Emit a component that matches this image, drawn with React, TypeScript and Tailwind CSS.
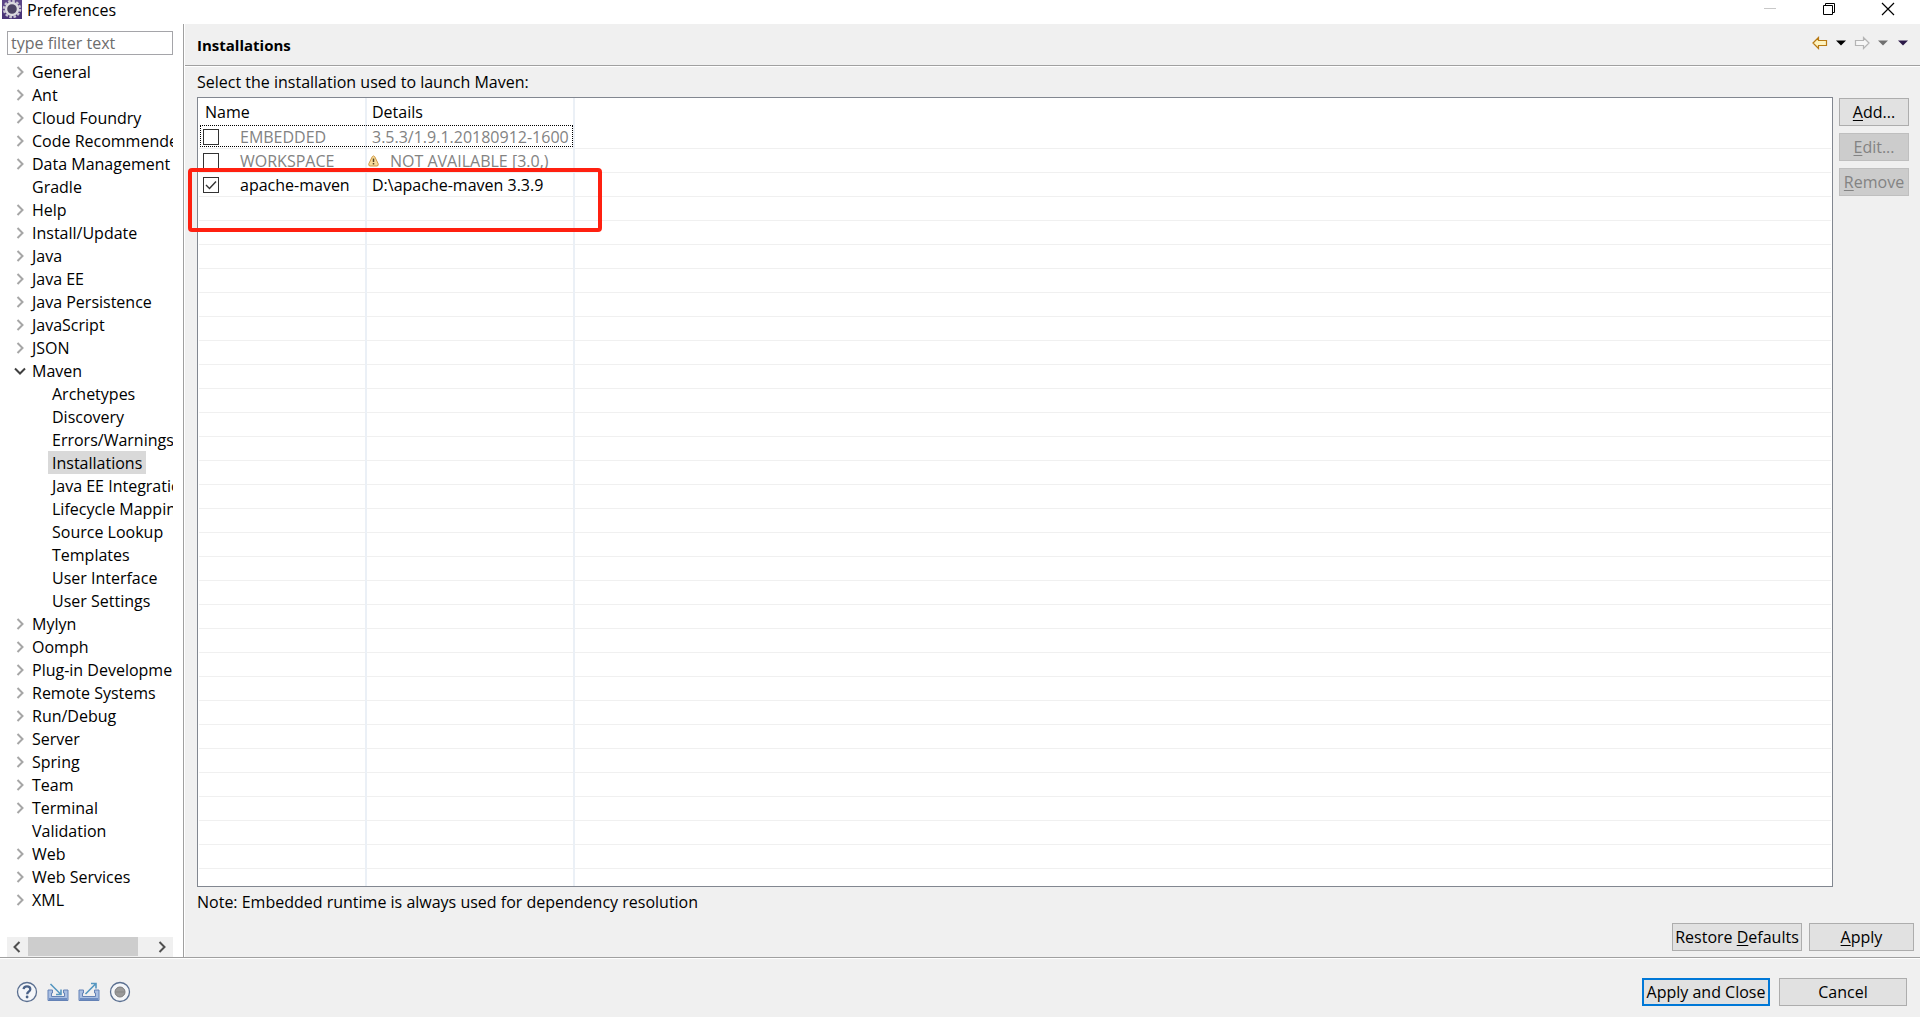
import React from 'react';

type Node = { label: string; open?: boolean; leaf?: boolean; children?: string[] };

const tree: Node[] = [
  { label: 'General' },
  { label: 'Ant' },
  { label: 'Cloud Foundry' },
  { label: 'Code Recommenders' },
  { label: 'Data Management' },
  { label: 'Gradle', leaf: true },
  { label: 'Help' },
  { label: 'Install/Update' },
  { label: 'Java' },
  { label: 'Java EE' },
  { label: 'Java Persistence' },
  { label: 'JavaScript' },
  { label: 'JSON' },
  {
    label: 'Maven',
    open: true,
    children: [
      'Archetypes',
      'Discovery',
      'Errors/Warnings',
      'Installations',
      'Java EE Integration',
      'Lifecycle Mappings',
      'Source Lookup',
      'Templates',
      'User Interface',
      'User Settings',
    ],
  },
  { label: 'Mylyn' },
  { label: 'Oomph' },
  { label: 'Plug-in Development' },
  { label: 'Remote Systems' },
  { label: 'Run/Debug' },
  { label: 'Server' },
  { label: 'Spring' },
  { label: 'Team' },
  { label: 'Terminal' },
  { label: 'Validation', leaf: true },
  { label: 'Web' },
  { label: 'Web Services' },
  { label: 'XML' },
];

const installations = [
  { name: 'EMBEDDED', details: '3.5.3/1.9.1.20180912-1600', external: false, focused: true },
  { name: 'WORKSPACE', details: 'NOT AVAILABLE [3.0,)', external: false, warning: true },
  { name: 'apache-maven', details: 'D:\\apache-maven 3.3.9', external: true },
];

const blankRows = Array.from({ length: 29 }, (_, i) => i);

const EclipseIcon = () => (
  <svg width="20" height="19" viewBox="0 0 20 19" aria-hidden="true">
    <rect width="20" height="19" fill="#5c4688" />
    <rect y="11" width="20" height="8" fill="#4a3578" />
    <circle cx="10" cy="9" r="8" fill="none" stroke="#c9c6d2" strokeWidth="2.4" strokeDasharray="2.6 1.59" />
    <circle cx="10" cy="9" r="6" fill="#4c4464" stroke="#dcdbe0" strokeWidth="2.4" />
  </svg>
);

const WarningIcon = () => (
  <svg width="11" height="12" viewBox="0 0 11 12" aria-hidden="true">
    <path d="M4.3 1.6 Q5.5 .2 6.7 1.6 L10.2 8.8 Q10.6 11 9 11 H2 Q.4 11 .8 8.8 Z" fill="#f8dc9a" stroke="#cf9a48" strokeLinejoin="round" />
    <path d="M5.5 3.5 V7 M5.5 8 V9.5" stroke="#5a4420" strokeWidth="1.5" />
  </svg>
);

const Arrow = ({ back }: { back?: boolean }) => (
  <svg width="16" height="14" viewBox="0 0 16 14" aria-hidden="true">
    {back ? (
      <path d="M1 7 L6.5 1.5 V4.5 H14.5 V9.5 H6.5 V12.5 Z" fill="#fdf3c0" stroke="#b87a14" strokeWidth="1.2" />
    ) : (
      <path d="M15 7 L9.5 1.5 V4.5 H1.5 V9.5 H9.5 V12.5 Z" fill="#f6f6f6" stroke="#b4b4b4" strokeWidth="1.2" />
    )}
  </svg>
);

const Caret = ({ color }: { color: string }) => (
  <svg width="10" height="6" viewBox="0 0 10 6" aria-hidden="true">
    <path d="M0 .5 H10 L5 5.5 Z" fill={color} />
  </svg>
);

const TrayIcon = ({ out }: { out?: boolean }) => (
  <svg width="22" height="20" viewBox="0 0 22 20" aria-hidden="true">
    <path d="M1 8 H5.5 V11 H4.5 V14.5 H17.5 V11 H16.5 V8 H21 V18.5 H1 Z" fill="#a9bfe2" stroke="#6482b6" />
    <path d="M2 17 H20" stroke="#6c8cc2" strokeWidth="2" />
    {out ? (
      <path d="M7.5 12 L17.5 2 M13 1.5 H18 V6.5" fill="none" stroke="#5596c0" strokeWidth="1.6" />
    ) : (
      <path d="M3.5 2 L13.5 12 M14 7.5 V12.5 H9" fill="none" stroke="#5596c0" strokeWidth="1.6" />
    )}
  </svg>
);

const Chevron = ({ open }: { open?: boolean }) =>
  open ? (
    <svg width="12" height="8" viewBox="0 0 12 8" aria-hidden="true">
      <path d="M1 1.5 L6 6.5 L11 1.5" fill="none" stroke="#404040" strokeWidth="2" />
    </svg>
  ) : (
    <svg width="8" height="12" viewBox="0 0 8 12" aria-hidden="true">
      <path d="M1.5 1 L6.5 6 L1.5 11" fill="none" stroke="#a6a6a6" strokeWidth="2" />
    </svg>
  );

const Button = ({ className = '', children, disabled }: { className?: string; children: React.ReactNode; disabled?: boolean }) => (
  <button
    type="button"
    disabled={disabled}
    className={`h-7 whitespace-nowrap border border-[#adadad] bg-[#e1e1e1] text-center leading-6 underline-offset-2 disabled:border-[#bfbfbf] disabled:bg-[#cccccc] disabled:text-[#838383] ${className}`}
  >
    {children}
  </button>
);

const TitleBar = () => (
  <header className="flex h-6 shrink-0 items-start justify-between bg-white pl-0.5">
    <div className="flex items-start gap-[5px]">
      <EclipseIcon />
      <h1 className="leading-5">Preferences</h1>
    </div>
    <div className="flex gap-[45px] pt-0.5 pr-[25px]">
      <button type="button" aria-label="Minimize" disabled>
        <svg width="14" height="14" viewBox="0 0 14 14">
          <path d="M1 6.5 H13" stroke="#c8c8c8" />
        </svg>
      </button>
      <button type="button" aria-label="Restore">
        <svg width="14" height="14" viewBox="0 0 14 14" fill="none" stroke="#000">
          <path d="M1.5 3.5 H10.5 V12.5 H1.5 Z M3.5 3.5 V1.5 H12.5 V10.5 H10.5" />
        </svg>
      </button>
      <button type="button" aria-label="Close">
        <svg width="14" height="14" viewBox="0 0 14 14">
          <path d="M1 1 L13 13 M13 1 L1 13" stroke="#000" strokeWidth="1.2" />
        </svg>
      </button>
    </div>
  </header>
);

const Sidebar = () => (
  <aside className="flex w-[184px] shrink-0 flex-col border-r border-[#a0a0a0] bg-white pt-[7px] pr-2.5 pl-[7px]">
    <input
      type="text"
      aria-label="Filter"
      placeholder="type filter text"
      className="h-6 w-full shrink-0 border border-[#a5a5a9] px-[3px] placeholder:text-[#6d6d6d]"
    />
    <ul role="tree" className="min-h-0 flex-1 overflow-hidden pt-[5px]">
      {tree.map((node) => (
        <li key={node.label} role="treeitem" aria-expanded={node.leaf ? undefined : !!node.open}>
          <button type="button" className="flex h-[23px] items-center whitespace-nowrap">
            <span className={`w-[25px] ${node.open ? 'pl-[7px]' : 'pl-[9px]'}`}>{!node.leaf && <Chevron open={node.open} />}</span>
            {node.label}
          </button>
          {node.children && (
            <ul role="group" className="pl-[41px]">
              {node.children.map((child) => (
                <li key={child} role="treeitem" aria-selected={child === 'Installations'}>
                  <button
                    type="button"
                    className={`flex h-[23px] items-center whitespace-nowrap px-1 ${child === 'Installations' ? 'bg-[#d9d9d9]' : ''}`}
                  >
                    {child}
                  </button>
                </li>
              ))}
            </ul>
          )}
        </li>
      ))}
    </ul>
    <div className="flex h-5 shrink-0 bg-[#f0f0f0]">
      <button type="button" aria-label="Scroll left" className="flex w-[21px] items-center pl-1.5">
        <svg width="8" height="12" viewBox="0 0 8 12">
          <path d="M6.5 1 L1.5 6 L6.5 11" fill="none" stroke="#505050" strokeWidth="2" />
        </svg>
      </button>
      <div className="flex-1">
        <div className="h-[19px] w-[110px] bg-[#cdcdcd]" />
      </div>
      <button type="button" aria-label="Scroll right" className="flex w-[21px] items-center pl-1.5">
        <svg width="8" height="12" viewBox="0 0 8 12">
          <path d="M1.5 1 L6.5 6 L1.5 11" fill="none" stroke="#505050" strokeWidth="2" />
        </svg>
      </button>
    </div>
  </aside>
);

const InstallationsTable = () => (
  <div className="relative min-w-0 flex-1">
    <div className="h-full overflow-hidden border border-[#828790] bg-white px-px">
      <table className="w-full table-fixed border-collapse">
        <colgroup>
          <col className="w-[167px]" />
          <col className="w-[208px]" />
          <col />
        </colgroup>
        <thead>
          <tr className="h-[26px] text-left">
            <th className="border-r-2 border-[#ebf0f6] p-0 pt-0.5 pl-1.5 font-normal">Name</th>
            <th className="border-r-2 border-[#ebf0f6] p-0 pt-0.5 pl-[5px] font-normal">Details</th>
            <td />
          </tr>
        </thead>
        <tbody>
          {installations.map((row) => (
            <tr key={row.name} className={`h-6 border-b border-[#f0f0f0] ${row.external ? '' : 'text-[#838383]'}`}>
              <td className="relative border-r-2 border-r-[#ebf0f6] p-0 pt-0.5 pl-1">
                {row.focused && <div className="absolute top-px left-px h-[22px] w-[373px] border border-dotted border-black" />}
                <label className="flex items-center leading-5">
                  <input type="checkbox" defaultChecked={row.external} className="peer size-4 appearance-none border border-[#333] bg-white" />
                  <svg width="16" height="16" viewBox="0 0 16 16" className="invisible -ml-4 peer-checked:visible" aria-hidden="true">
                    <path d="M3 8 L6.5 11.5 L13 4.5" fill="none" stroke="#333" strokeWidth="1.4" />
                  </svg>
                  <span className="ml-[21px]">{row.name}</span>
                </label>
              </td>
              <td className="border-r-2 border-r-[#ebf0f6] p-0 pt-0.5 pl-[5px]">
                <div className="flex items-center whitespace-nowrap leading-5">
                  {row.warning && (
                    <span className="mr-2 -ml-1 w-3.5">
                      <WarningIcon />
                    </span>
                  )}
                  {row.details}
                </div>
              </td>
              <td />
            </tr>
          ))}
          {blankRows.map((i) => (
            <tr key={i} className="h-6 border-b border-[#f0f0f0]">
              <td className="border-r-2 border-r-[#ebf0f6]" />
              <td className="border-r-2 border-r-[#ebf0f6]" />
              <td />
            </tr>
          ))}
        </tbody>
      </table>
    </div>
    {/* highlighted installation */}
    <div className="pointer-events-none absolute top-[71px] -left-[9px] h-16 w-[414px] rounded border-4 border-[#ff2010]" />
  </div>
);

const Content = () => (
  <main className="flex min-w-0 flex-1 flex-col border-l border-white">
    <div className="flex h-[42px] shrink-0 items-center justify-between border-b border-[#a0a0a0] pr-3 pl-3">
      <h2 className="pt-0.5 text-[15px] font-bold">Installations</h2>
      <div className="mb-1 flex items-center gap-2">
        <button type="button" aria-label="Back"><Arrow back /></button>
        <button type="button" aria-label="Back history"><Caret color="#000" /></button>
        <button type="button" aria-label="Forward"><Arrow /></button>
        <button type="button" aria-label="Forward history"><Caret color="#707070" /></button>
        <button type="button" aria-label="View menu" className="ml-0.5"><Caret color="#2c1a48" /></button>
      </div>
    </div>
    <div className="flex min-h-0 flex-1 flex-col border-t border-white pl-3">
      <p className="h-[30px] shrink-0 pt-[3px] leading-6">Select the installation used to launch Maven:</p>
      <div className="flex min-h-0 flex-1 gap-1.5 pr-[11px]">
        <InstallationsTable />
        <div className="flex w-[70px] flex-col gap-[7px] pt-px">
          <Button><u>A</u>dd...</Button>
          <Button disabled><u>E</u>dit...</Button>
          <Button disabled><u>R</u>emove</Button>
        </div>
      </div>
      <p className="pt-[3px] leading-6">Note: Embedded runtime is always used for dependency resolution</p>
      <div className="flex justify-end gap-[7px] pt-[9px] pr-1.5 pb-1.5">
        <Button className="w-[130px]">Restore <u>D</u>efaults</Button>
        <Button className="w-[105px]"><u>A</u>pply</Button>
      </div>
    </div>
  </main>
);

const Footer = () => (
  <footer className="flex h-[60px] shrink-0 items-center justify-between border-t border-[#a0a0a0] pt-2 pr-[13px] pl-4 shadow-[inset_0_1px_0_#fff]">
    <div className="flex items-center gap-[9px]">
      <button type="button" aria-label="Help">
        <svg width="22" height="22" viewBox="0 0 22 22">
          <circle cx="11" cy="11" r="9.5" fill="#f4f6f9" stroke="#5a6f90" strokeWidth="1.3" />
          <path d="M7.6 8.2 Q7.8 5.3 11 5.3 Q14.3 5.3 14.3 8.2 Q14.3 9.8 12.6 10.8 Q11.2 11.7 11.2 13.3" fill="none" stroke="#4a6288" strokeWidth="2.3" />
          <circle cx="11.1" cy="16" r="1.4" fill="#4a6288" />
        </svg>
      </button>
      <button type="button" aria-label="Import preferences"><TrayIcon /></button>
      <button type="button" aria-label="Export preferences"><TrayIcon out /></button>
      <button type="button" aria-label="Record preferences">
        <svg width="22" height="22" viewBox="0 0 22 22">
          <circle cx="11" cy="11" r="9.5" fill="#f4f6f9" stroke="#5a6f90" strokeWidth="1.3" />
          <circle cx="11" cy="11" r="5" fill="#9a9a9a" stroke="#7c7c7c" />
          <path d="M7 11 H15" stroke="#858585" />
        </svg>
      </button>
    </div>
    <div className="flex gap-[9px]">
      <Button className="w-32 outline-2 -outline-offset-2 outline-[#0078d7]">Apply and Close</Button>
      <Button className="w-32">Cancel</Button>
    </div>
  </footer>
);

const App: React.FC = () => {
  return (
    <div className="flex h-screen flex-col overflow-hidden bg-[#f0f0f0] font-['Open_Sans','Noto_Sans',sans-serif] text-base text-black">
      <TitleBar />
      <div className="flex min-h-0 flex-1">
        <Sidebar />
        <Content />
      </div>
      <Footer />
    </div>
  );
};

export default App;
